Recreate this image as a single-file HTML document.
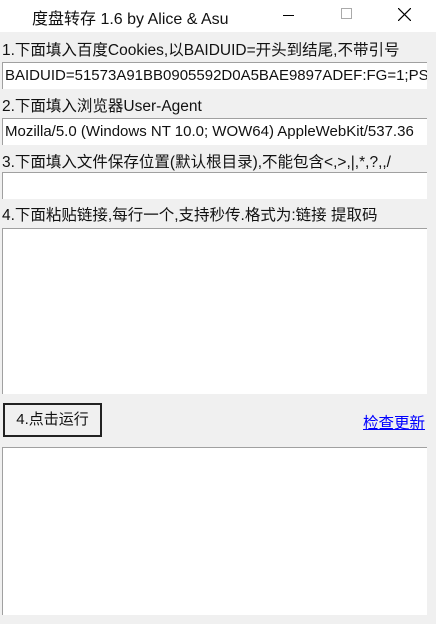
<!DOCTYPE html>
<html><head><meta charset="utf-8"><style>
*{margin:0;padding:0;box-sizing:border-box}
body{width:436px;height:624px;background:#f0f0f0;position:relative;overflow:hidden;font-family:"Liberation Sans","Noto Sans CJK SC",sans-serif;font-size:15.5px;color:#111}
.t{position:absolute;left:0;top:0;width:436px;height:32px;background:#fff}
.a{position:absolute;white-space:nowrap}
.box{position:absolute;background:#fff;border-top:1px solid #a0a0a0;border-left:1px solid #a0a0a0;overflow:hidden;white-space:nowrap;font-size:15px;padding:4px 0 0 2px}
</style></head><body>
<div class="t"></div>
<div class="a" style="left:32px;top:5px;font-size:16px">度盘转存 1.6 by Alice &amp; Asu</div>
<div class="a" style="left:283px;top:15px;width:11px;height:1px;background:#000"></div>
<div class="a" style="left:341px;top:8px;width:11px;height:11px;border:1px solid #aaa"></div>
<svg class="a" style="left:398px;top:8px" width="13" height="13"><path d="M0 0L13 13M13 0L0 13" stroke="#000" stroke-width="1.2"/></svg>
<div class="a" style="left:2px;top:38px">1.下面填入百度Cookies,以BAIDUID=开头到结尾,不带引号</div>
<div class="box" style="left:2px;top:62px;width:425px;height:27px">BAIDUID=51573A91BB0905592D0A5BAE9897ADEF:FG=1;PSTM</div>
<div class="a" style="left:2px;top:94px">2.下面填入浏览器User-Agent</div>
<div class="box" style="left:2px;top:118px;width:425px;height:27px">Mozilla/5.0 (Windows NT 10.0; WOW64) AppleWebKit/537.36</div>
<div class="a" style="left:2px;top:150px">3.下面填入文件保存位置(默认根目录),不能包含&lt;,&gt;,|,*,?,,/</div>
<div class="box" style="left:2px;top:172px;width:425px;height:27px"></div>
<div class="a" style="left:2px;top:203px">4.下面粘贴链接,每行一个,支持秒传.格式为:链接 提取码</div>
<div class="box" style="left:2px;top:228px;width:425px;height:166px"></div>
<div class="a" style="left:3px;top:403px;width:99px;height:34px;border:2px solid #222;background:#f0f0f0;font-size:15px;text-align:center;line-height:30px">4.点击运行</div>
<div class="a" style="left:363px;top:411px;color:#00f;text-decoration:underline">检查更新</div>
<div class="box" style="left:2px;top:447px;width:425px;height:168px"></div>
</body></html>
